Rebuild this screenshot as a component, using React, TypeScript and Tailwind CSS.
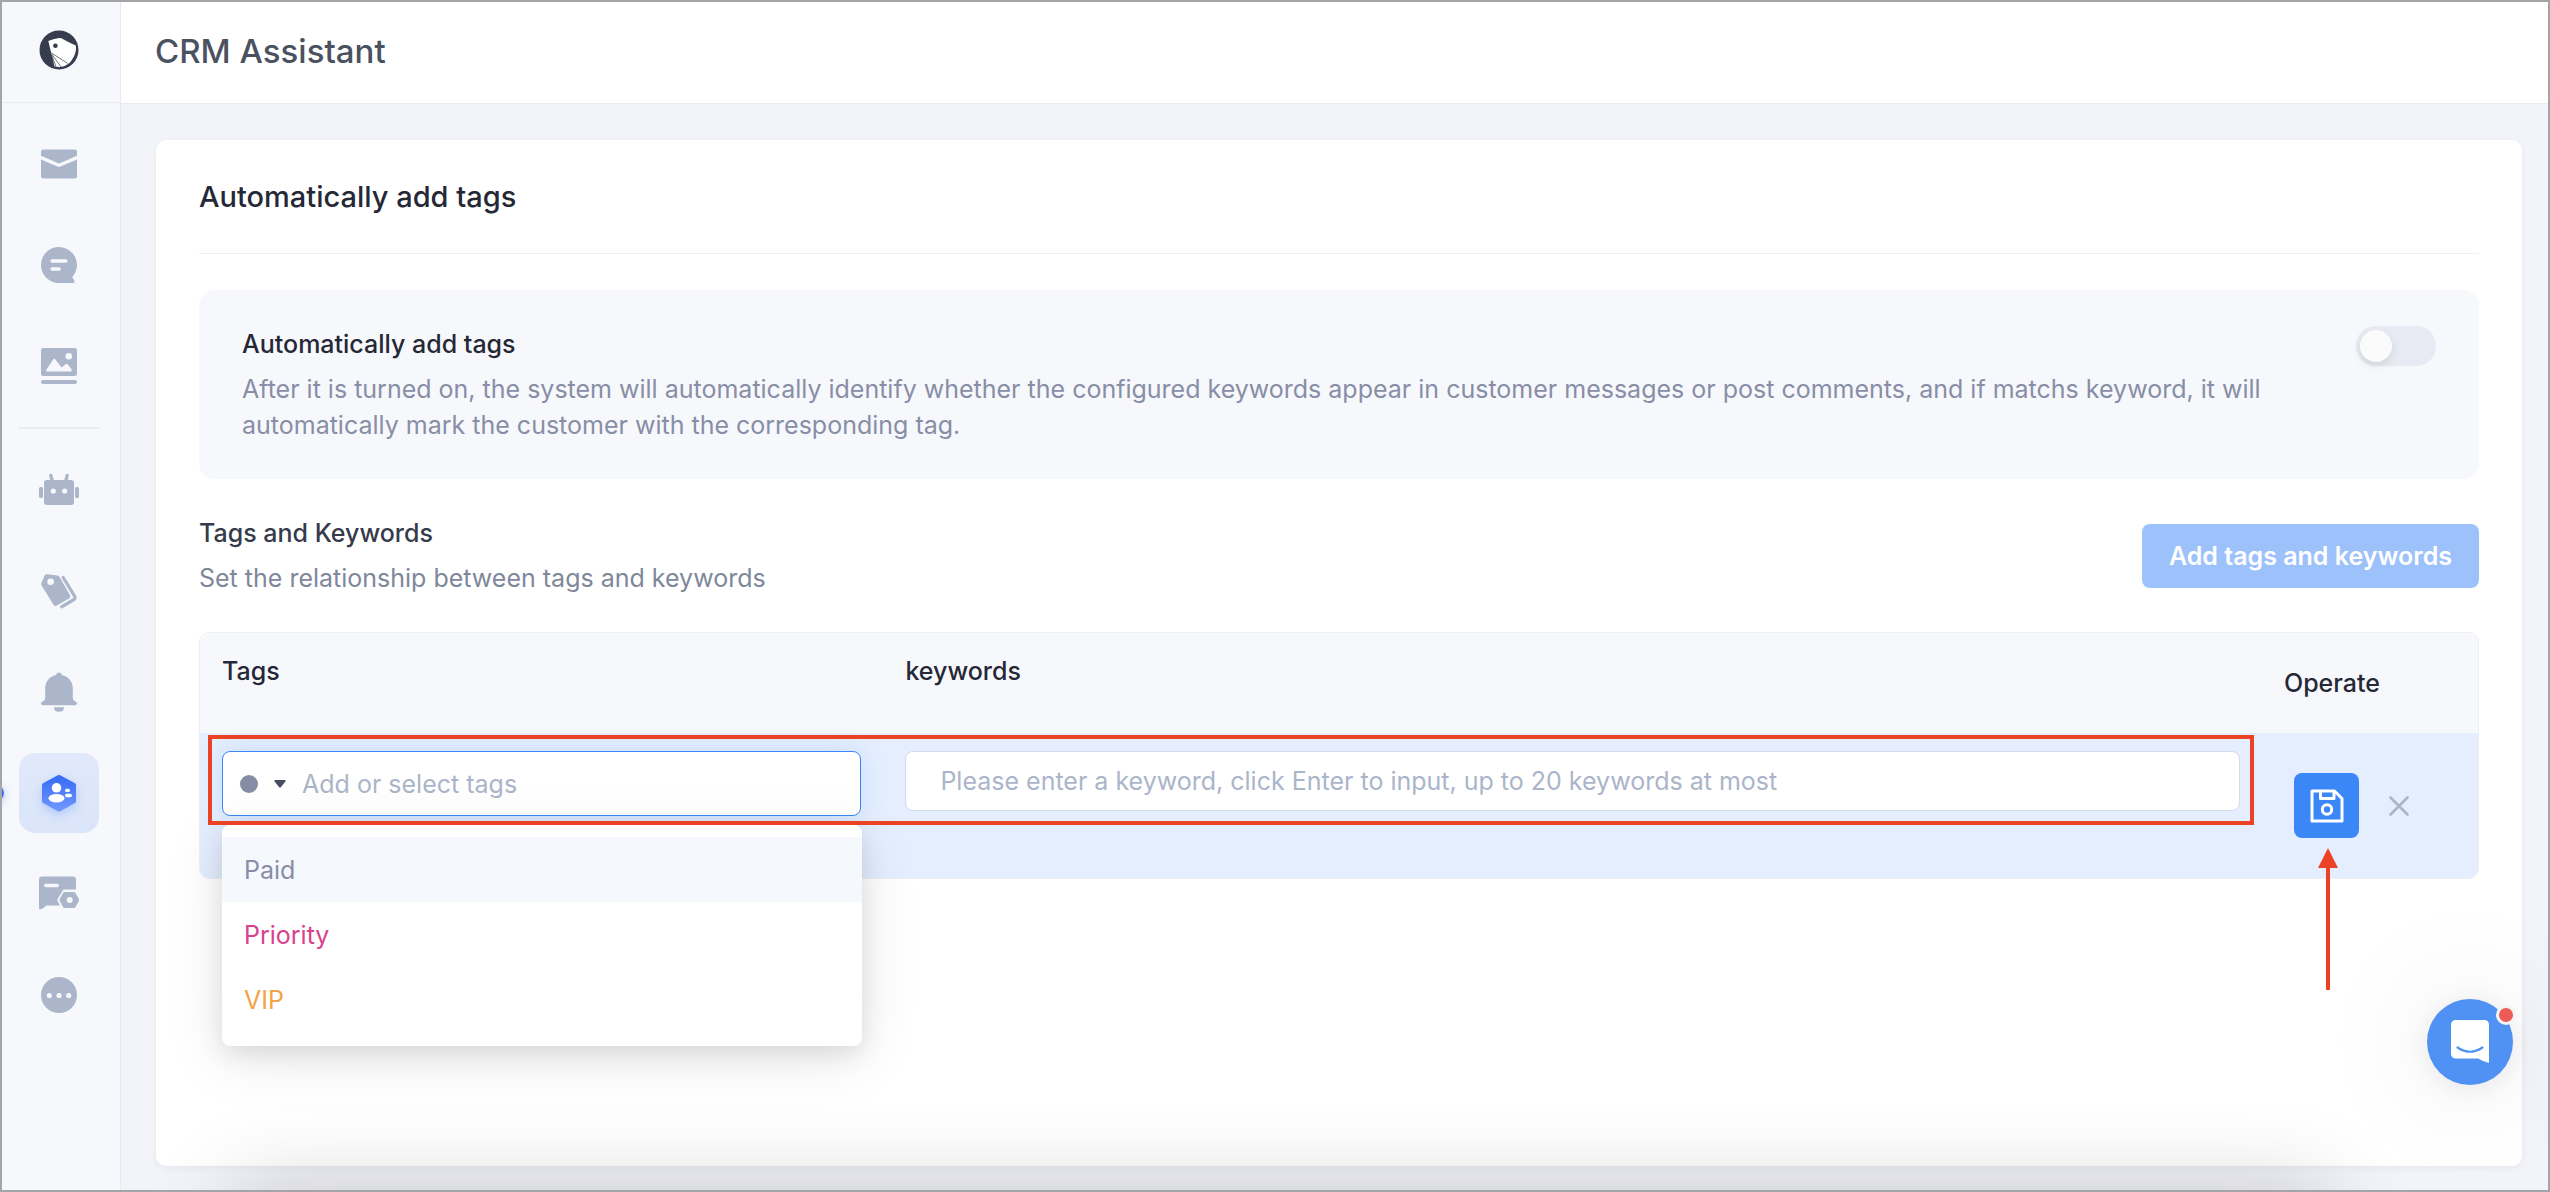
import { useState } from "react";
import type { ReactNode } from "react";

interface NavItem {
  label: string;
  icon: ReactNode;
  active?: boolean;
}

interface TagOption {
  label: string;
  className: string;
}

const TAG_OPTIONS: TagOption[] = [
  { label: "Paid", className: "text-[#878ea6] bg-[#f5f8fd]" },
  { label: "Priority", className: "text-[#d9418f]" },
  { label: "VIP", className: "text-[#f3a345]" },
];

function LogoIcon() {
  return (
    <svg width="40" height="40" viewBox="0 0 40 40" aria-hidden="true">
      <circle cx="20" cy="20" r="19.5" fill="#373d4d" />
      <path
        d="M9.3 11 13.6 9.6C15.8 8.8 18 8.4 20.7 8 23 8.2 24.8 9.6 26.5 10.4L30.4 12.6 36.8 15.6C37.8 21 35.6 26.5 32 31.2 29.6 34 27 35.6 24 36.6 21 37.2 18 37.2 15.4 36.2 14.6 32 13.8 28 12.6 24.4Z"
        fill="#fff"
      />
      <circle cx="16.4" cy="15.7" r="2.3" fill="#373d4d" />
      <path
        d="M12.4 23 28.8 33.4M12.6 24 22 36.8M12.6 25 17 36.6"
        stroke="#373d4d"
        strokeWidth="0.7"
        fill="none"
      />
    </svg>
  );
}

function MailIcon() {
  return (
    <svg width="40" height="40" viewBox="0 0 40 40" fill="currentColor" aria-hidden="true">
      <path d="M4.5 5.5H35.5A2.5 2.5 0 0 1 38 8V11.8L20 19.5 2 11.8V8A2.5 2.5 0 0 1 4.5 5.5Z" />
      <path d="M2 15.5 18.5 22.6Q20 23.2 21.5 22.6L38 15.5V32A2.5 2.5 0 0 1 35.5 34.5H4.5A2.5 2.5 0 0 1 2 32Z" />
    </svg>
  );
}

function ChatIcon() {
  return (
    <svg width="40" height="40" viewBox="0 0 40 40" aria-hidden="true">
      <path
        d="M20 2A18 18 0 0 1 33.2 32.2L35.3 35.3Q35.8 38 34.5 38H20A18 18 0 0 1 20 2Z"
        fill="currentColor"
      />
      <path d="M13.2 16H26.8M13.2 24H20" stroke="#f7f8fc" strokeWidth="3.6" strokeLinecap="round" />
    </svg>
  );
}

function ImageIcon() {
  return (
    <svg width="40" height="40" viewBox="0 0 40 40" fill="currentColor" aria-hidden="true">
      <rect x="2" y="2" width="36" height="28" rx="2.5" />
      <rect x="2" y="34" width="36" height="4" rx="2" />
      <circle cx="29.8" cy="10.3" r="3.3" fill="#f7f8fc" />
      <path
        d="M7.5 23.5 14.4 13.2Q15.3 12.2 16.2 13.2L22.6 21.4 27 18Q28 17.4 28.8 18.4L32.6 23.2Q33.4 25.5 31.6 25.5H8.4Q6.2 25.5 7.5 23.5Z"
        fill="#f7f8fc"
      />
    </svg>
  );
}

function RobotIcon() {
  return (
    <svg width="40" height="40" viewBox="0 0 40 40" fill="currentColor" aria-hidden="true">
      <rect x="5" y="10" width="30" height="25" rx="3" />
      <rect x="0" y="17" width="4" height="11" rx="1.5" />
      <rect x="36" y="17" width="4" height="11" rx="1.5" />
      <path d="M11.8 5.5 13 10M28.2 5.5 27 10" stroke="currentColor" strokeWidth="3.4" strokeLinecap="round" />
      <circle cx="14.3" cy="21" r="2.6" fill="#f7f8fc" />
      <circle cx="25.7" cy="21" r="2.6" fill="#f7f8fc" />
    </svg>
  );
}

function TagsIcon() {
  return (
    <svg width="40" height="40" viewBox="0 0 40 40" aria-hidden="true">
      <path
        d="M8.2 3.2 18.4 4.4Q19.8 4.6 20.6 5.9L31 24.2Q32 26 30.3 27.2L17.5 34.8Q15.8 35.7 14.7 34L2.6 14.6Q2 13.5 2.4 12.3L5.6 4.6Q6.4 3 8.2 3.2Z"
        fill="currentColor"
      />
      <circle cx="11.6" cy="10.8" r="3.3" fill="#f7f8fc" />
      <path
        d="M24.2 6.5 35.6 25.2Q36.8 27.2 35 28.5L22.6 35.8"
        stroke="currentColor"
        strokeWidth="3.2"
        strokeLinecap="round"
        strokeLinejoin="round"
        fill="none"
      />
    </svg>
  );
}

function BellIcon() {
  return (
    <svg width="40" height="40" viewBox="0 0 40 40" fill="currentColor" aria-hidden="true">
      <path d="M20 0.5A2.8 2.8 0 0 1 22.8 3.1C29.5 4.6 33.8 9.5 33.8 16.5V26Q33.8 28 35.5 29L37 29.8Q38.2 30.6 38 31.8 37.7 33.2 36 33.2H4Q2.3 33.2 2 31.8 1.8 30.6 3 29.8L4.5 29Q6.2 28 6.2 26V16.5C6.2 9.5 10.5 4.6 17.2 3.1A2.8 2.8 0 0 1 20 0.5Z" />
      <path d="M15 35.2H25Q25 39.7 20 39.7T15 35.2Z" />
    </svg>
  );
}

function CustomersIcon() {
  return (
    <svg
      width="40"
      height="40"
      viewBox="0 0 40 40"
      className="drop-shadow-[0_4px_5px_rgba(65,115,250,0.25)]"
      aria-hidden="true"
    >
      <defs>
        <linearGradient id="hexagon" x1="0" y1="0" x2="0" y2="1">
          <stop offset="0" stopColor="#3569f6" />
          <stop offset="1" stopColor="#7299ff" />
        </linearGradient>
      </defs>
      <path
        d="M18.8 2.3Q20 1.6 21.2 2.3L36 10.3Q37 11 37 12.2V28.2Q37 29.4 36 30L21.2 38.2Q20 38.9 18.8 38.2L4 30Q3 29.4 3 28.2V12.2Q3 11 4 10.3Z"
        fill="url(#hexagon)"
      />
      <circle cx="17.5" cy="14.8" r="4.8" fill="#fff" />
      <ellipse cx="17.5" cy="25.2" rx="8" ry="4.2" fill="#fff" />
      <rect x="26" y="15.7" width="5" height="3.4" rx="1.7" fill="#fff" />
      <rect x="26" y="20.8" width="7" height="3.4" rx="1.7" fill="#fff" />
    </svg>
  );
}

function BoardSettingsIcon() {
  return (
    <svg width="40" height="40" viewBox="0 0 40 40" aria-hidden="true">
      <path
        d="M3 2.5H34A3 3 0 0 1 37 5.5V31.5H7.5L3.6 34.6Q0 36 0 34V5.5A3 3 0 0 1 3 2.5Z"
        fill="currentColor"
      />
      <path d="M6.8 11.5H18.2" stroke="#f7f8fc" strokeWidth="3.6" strokeLinecap="round" />
      <path d="M24.5 15.5H40V37H24L18 26Z" fill="#f7f8fc" />
      <path
        d="M25.5 18H35Q36 18 36.5 19L40 25.2Q40.2 26 40 26.8L36.5 33Q36 34 35 34H25.5Q24.5 34 24 33L20.6 26.8Q20.3 26 20.6 25.2L24 19Q24.5 18 25.5 18Z"
        fill="currentColor"
      />
      <circle cx="30.7" cy="26" r="3" fill="#f7f8fc" />
    </svg>
  );
}

function MoreIcon() {
  return (
    <svg width="40" height="40" viewBox="0 0 40 40" aria-hidden="true">
      <circle cx="20" cy="20" r="18" fill="currentColor" />
      <circle cx="10.3" cy="20.5" r="2.6" fill="#f7f8fc" />
      <circle cx="20" cy="20.5" r="2.6" fill="#f7f8fc" />
      <circle cx="29.7" cy="20.5" r="2.6" fill="#f7f8fc" />
    </svg>
  );
}

function SaveIcon() {
  return (
    <svg
      width="34"
      height="34"
      viewBox="0 0 34 34"
      fill="none"
      stroke="currentColor"
      strokeWidth="3"
      strokeLinejoin="round"
      aria-hidden="true"
    >
      <path d="M2 2H24.5L32 9.5V32H2Z" />
      <path d="M10.500 2V9.500H24V2" />
      <circle cx="17" cy="20.500" r="4.700" />
    </svg>
  );
}

function CloseIcon() {
  return (
    <svg
      width="20"
      height="20"
      viewBox="0 0 20 20"
      stroke="currentColor"
      strokeWidth="2.6"
      strokeLinecap="round"
      aria-hidden="true"
    >
      <path d="M1.5 1.5 18.5 18.5M18.5 1.5 1.5 18.5" />
    </svg>
  );
}

function MessengerIcon() {
  return (
    <svg width="38" height="44" viewBox="0 0 38 44" aria-hidden="true">
      <path
        d="M4.5 0H33.5A4.5 4.5 0 0 1 38 4.5V43Q31 41 27 38.5H4.5A4.5 4.5 0 0 1 0 34V4.5A4.5 4.5 0 0 1 4.5 0Z"
        fill="#fff"
      />
      <path d="M6.5 27.5Q19 36 31.5 27.5" stroke="#5091f4" strokeWidth="2.2" strokeLinecap="round" fill="none" />
    </svg>
  );
}

const TOP_ITEMS: NavItem[] = [
  { label: "Inbox", icon: <MailIcon /> },
  { label: "Comments", icon: <ChatIcon /> },
  { label: "Media", icon: <ImageIcon /> },
];

const BOTTOM_ITEMS: NavItem[] = [
  { label: "Chatbot", icon: <RobotIcon /> },
  { label: "Tags", icon: <TagsIcon /> },
  { label: "Notifications", icon: <BellIcon /> },
  { label: "CRM Assistant", icon: <CustomersIcon />, active: true },
  { label: "Board settings", icon: <BoardSettingsIcon /> },
  { label: "More", icon: <MoreIcon /> },
];

function NavLink({ item }: { item: NavItem }) {
  return (
    <a
      href="#"
      aria-label={item.label}
      aria-current={item.active ? "page" : undefined}
      className={
        item.active
          ? "relative flex size-20 items-center justify-center rounded-2xl bg-linear-to-b from-[#e1e9fa] to-[#dae5fa]"
          : "flex size-20 items-center justify-center text-[#abb6cb]"
      }
    >
      {item.active && (
        <span className="absolute top-1/2 -left-[31px] size-4 -translate-y-1/2 rounded-full bg-[#3b6ff5] shadow-[0_2px_8px_rgba(59,111,245,0.4)]" />
      )}
      {item.icon}
    </a>
  );
}

function Sidebar() {
  return (
    <aside className="flex w-[119px] shrink-0 flex-col overflow-hidden border-r border-[#e8eaef] bg-[#f7f8fc]">
      <div className="flex h-[101px] shrink-0 items-center justify-center border-b border-[#e8eaef] pr-1 pb-1">
        <LogoIcon />
      </div>
      <nav className="flex flex-col items-center gap-[21px] pt-[21px] pr-1">
        {TOP_ITEMS.map((item) => (
          <NavLink key={item.label} item={item} />
        ))}
        <hr className="w-20 border-t-2 border-[#eaecf1]" />
        {BOTTOM_ITEMS.map((item) => (
          <NavLink key={item.label} item={item} />
        ))}
      </nav>
    </aside>
  );
}

function TagSelect() {
  const [tag, setTag] = useState("");

  return (
    <div className="relative">
      <div className="flex h-[65px] items-center rounded-lg border border-[#3b87f7] bg-white px-[17px] shadow-[0_0_24px_rgba(59,135,247,0.15)]">
        <button type="button" aria-label="Tag color" className="flex items-center gap-4">
          <span className="size-[18px] rounded-full bg-[#868ca4]" />
          <svg width="12" height="8" viewBox="0 0 12 8" aria-hidden="true">
            <path d="M1.5 0H10.5Q12.5 0 11.4 1.5L7 7Q6 8 5 7L0.6 1.5Q-0.5 0 1.5 0Z" fill="#474f5e" />
          </svg>
        </button>
        <input
          type="text"
          aria-label="Tag"
          value={tag}
          onChange={(e) => setTag(e.target.value)}
          placeholder="Add or select tags"
          className="ml-4 min-w-0 flex-1 outline-none placeholder:text-[#abb5ca]"
        />
      </div>
      <ul className="absolute top-[74px] -right-px left-0 z-10 rounded-lg bg-white pt-3 pb-[14px] shadow-[0_12px_64px_rgba(0,0,0,0.09),0_8px_24px_rgba(0,0,0,0.1)]">
        {TAG_OPTIONS.map((option) => (
          <li key={option.label}>
            <button
              type="button"
              onClick={() => setTag(option.label)}
              className={`block h-[65px] w-full px-[22px] text-left ${option.className}`}
            >
              {option.label}
            </button>
          </li>
        ))}
      </ul>
    </div>
  );
}

function KeywordTable() {
  const [keyword, setKeyword] = useState("");

  return (
    <div className="relative mt-9">
      <div className="rounded-[10px] border border-[#edeff3]">
        <table className="w-full table-fixed border-separate border-spacing-0 text-left">
          <thead className="text-[#252836]">
            <tr className="h-[100px]">
              <th className="w-[30%] rounded-tl-[9px] bg-[#f7f8fc] px-[22px] pt-5 align-top font-medium">Tags</th>
              <th className="bg-[#f7f8fc] px-[22px] pt-5 align-top font-medium">keywords</th>
              <th className="w-[216px] rounded-tr-[9px] bg-[#f7f8fc] px-[22px] font-medium">Operate</th>
            </tr>
          </thead>
          <tbody>
            <tr className="h-[145px]">
              <td className="rounded-bl-[9px] bg-[#e4eefe] px-[22px] pt-[18px] align-top">
                <TagSelect />
              </td>
              <td className="bg-[#e4eefe] px-[22px] pt-[18px] align-top">
                <input
                  type="text"
                  aria-label="Keywords"
                  value={keyword}
                  onChange={(e) => setKeyword(e.target.value)}
                  placeholder="Please enter a keyword, click Enter to input, up to 20 keywords at most"
                  className="block h-[60px] w-full rounded-lg border border-[#d6dae6] bg-white px-[34px] outline-none placeholder:text-[#abb5ca]"
                />
              </td>
              <td className="rounded-br-[9px] bg-[#e4eefe] pl-8">
                <div className="flex items-center gap-[30px]">
                  <button
                    type="button"
                    aria-label="Save"
                    className="flex size-[65px] items-center justify-center rounded-lg bg-[#3b87f7] text-white"
                  >
                    <SaveIcon />
                  </button>
                  <button type="button" aria-label="Cancel" className="text-[#abb5ca]">
                    <CloseIcon />
                  </button>
                </div>
              </td>
            </tr>
          </tbody>
        </table>
      </div>

      <div className="pointer-events-none absolute top-[103px] right-[225px] left-[9px] z-20 h-[90px] border-4 border-[#eb4125]" />
      <svg
        width="20"
        height="142"
        viewBox="0 0 20 142"
        className="pointer-events-none absolute top-[216px] right-[141px] z-20"
        aria-hidden="true"
      >
        <path d="M10 0 20 20H12V142H8V20H0Z" fill="#eb4125" />
      </svg>
    </div>
  );
}

export default function App() {
  const [enabled, setEnabled] = useState(false);

  return (
    <div className="relative flex min-h-screen overflow-hidden border-2 border-[#a4a5a8] bg-[#f3f4f9] font-['Inter',sans-serif] text-[25px] leading-9">
      <Sidebar />

      <div className="flex min-w-0 flex-1 flex-col">
        <header className="flex h-[102px] shrink-0 items-center border-b border-[#e8eaef] bg-white px-[34px] pb-1">
          <h1 className="text-[33px] font-medium text-[#4a5160]">CRM Assistant</h1>
        </header>

        <main className="mt-9 mr-[26px] mb-6 ml-[35px] flex-1 rounded-[10px] bg-white px-[43px] shadow-[0_2px_6px_rgba(30,40,70,0.06)]">
          <h2 className="flex h-[114px] items-center border-b border-[#eff0f3] text-[29px] font-medium text-[#252836]">
            Automatically add tags
          </h2>

          <section className="mt-9 flex justify-between rounded-2xl bg-[#f7f8fc] px-[43px] py-9">
            <div className="max-w-[2040px]">
              <h3 className="mb-[9px] font-medium text-[#252836]">
                <label htmlFor="auto-tags">Automatically add tags</label>
              </h3>
              <p className="text-[#878ea6]">
                After it is turned on, the system will automatically identify whether the configured keywords appear in
                customer messages or post comments, and if matchs keyword, it will automatically mark the customer with
                the corresponding tag.
              </p>
            </div>
            <input
              id="auto-tags"
              type="checkbox"
              role="switch"
              checked={enabled}
              onChange={(e) => setEnabled(e.target.checked)}
              className="h-10 w-20 shrink-0 appearance-none rounded-full bg-[#e7eaf2] p-1 before:block before:size-8 before:rounded-full before:bg-[#fbfbfc] before:shadow-[0_4px_8px_rgba(0,35,11,0.1)] checked:bg-[#3b87f7] checked:before:translate-x-10"
            />
          </section>

          <section className="mt-9 flex items-center justify-between">
            <div>
              <h3 className="mb-[9px] font-medium text-[#353b4b]">Tags and Keywords</h3>
              <p className="text-[#7f879b]">Set the relationship between tags and keywords</p>
            </div>
            <button type="button" className="h-16 rounded-lg bg-[#9dc1fa] px-[27px] font-semibold text-white">
              Add tags and keywords
            </button>
          </section>

          <KeywordTable />
        </main>
      </div>

      {/* soft shadow rising from the bottom edge */}
      <div className="pointer-events-none absolute top-full right-[220px] left-[230px] h-40 shadow-[0_0_90px_rgba(0,0,0,0.19)]" />

      <button
        type="button"
        aria-label="Open chat"
        className="absolute right-[35px] bottom-[105px] flex size-[86px] items-center justify-center rounded-full bg-[#5091f4] shadow-[0_0_130px_rgba(0,0,0,0.1),0_4px_30px_rgba(0,0,0,0.08)]"
      >
        <MessengerIcon />
        <span className="absolute top-[6px] -right-[3px] size-5 rounded-full border-3 border-[#f3f4f6] bg-[#ec5b55]" />
      </button>
    </div>
  );
}
